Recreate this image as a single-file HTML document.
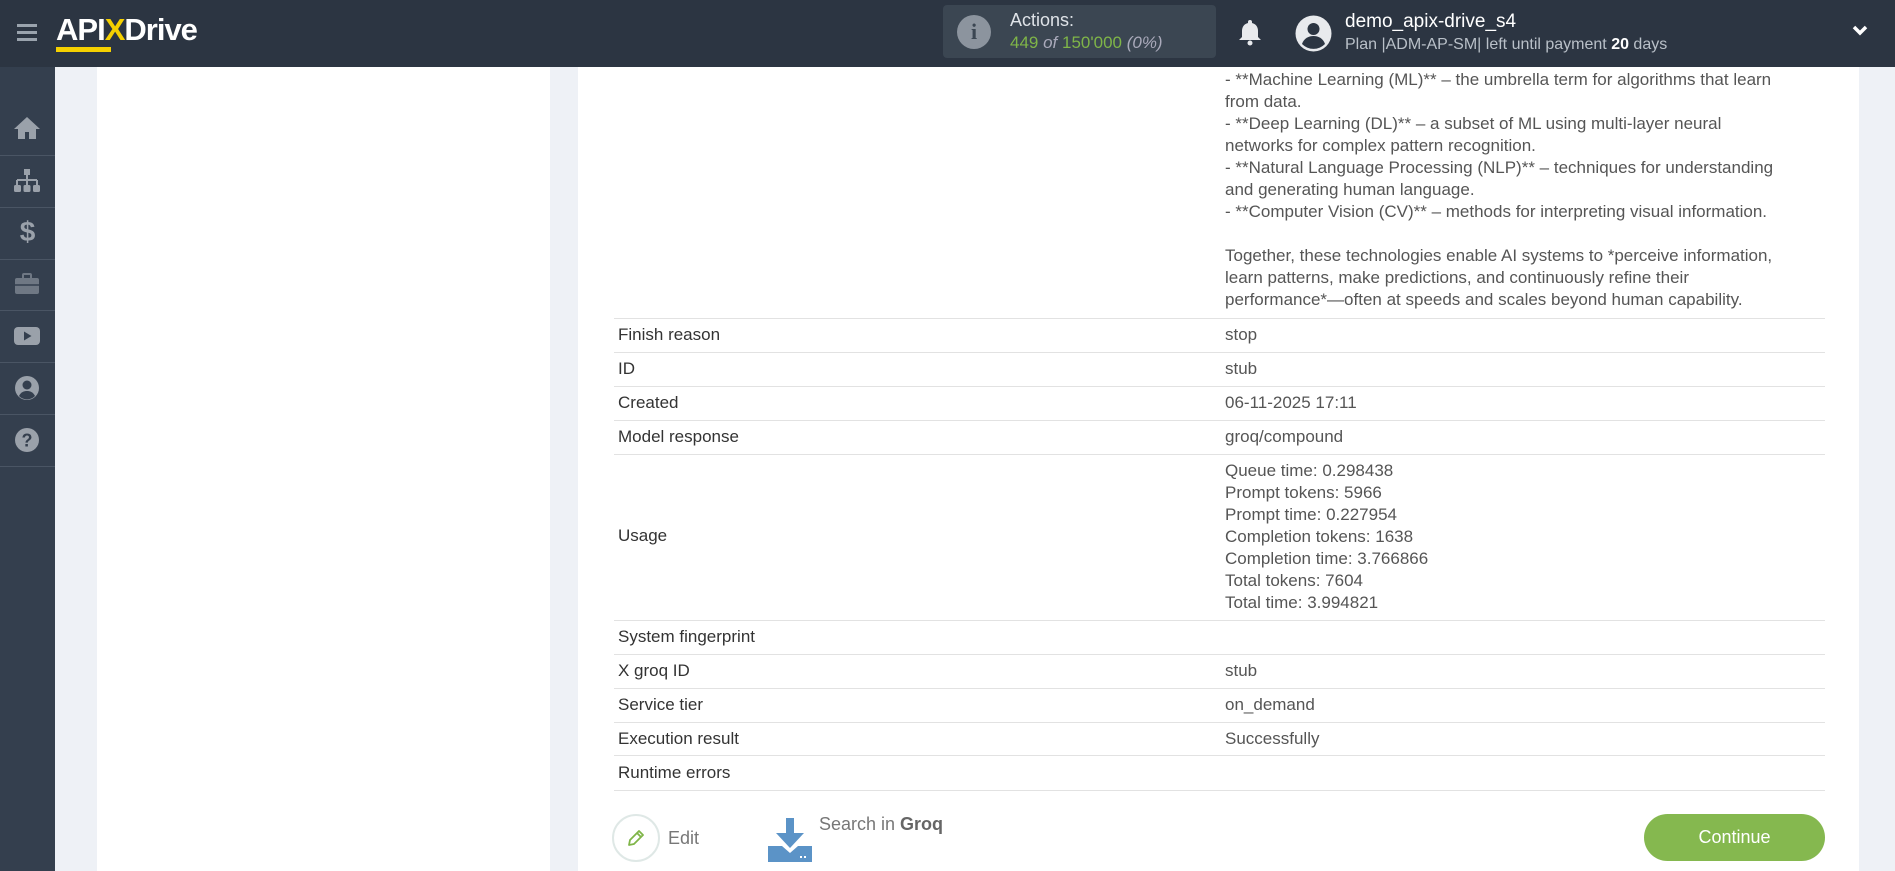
<!DOCTYPE html>
<html><head><meta charset="utf-8"><style>
*{margin:0;padding:0;box-sizing:border-box}
body{width:1895px;height:871px;overflow:hidden;background:#eef1f6;font-family:"Liberation Sans",Arial,sans-serif;position:relative}
.hdr{position:absolute;left:0;top:0;width:1895px;height:67px;background:#2c3542}
.side{position:absolute;left:0;top:67px;width:55px;height:804px;background:#343f4e}
.sep{position:absolute;left:0;width:55px;height:1px;background:#4a5564}
.ic{position:absolute;left:13px;width:28px;height:28px}
.p1{position:absolute;left:97px;top:67px;width:453px;height:804px;background:#fff}
.p2{position:absolute;left:578px;top:67px;width:1281px;height:804px;background:#fff}
.t{position:absolute;font-size:17px;line-height:22px;white-space:nowrap}
.lab{color:#333;left:618px}
.val{color:#555;left:1225px}
.ln{position:absolute;left:614px;width:1211px;height:1px;background:#e2e2e2}
</style></head><body>
<div class="hdr">
 <div style="position:absolute;left:17px;top:24px;width:20px;height:3px;background:#9aa3ad;box-shadow:0 7px 0 #9aa3ad,0 14px 0 #9aa3ad"></div>
 <div style="position:absolute;left:56px;top:12px;font-size:31px;font-weight:bold;color:#fff;letter-spacing:-1px">API<span style="color:#f5d000">X</span>Drive</div>
 <div style="position:absolute;left:56px;top:47px;width:55px;height:5px;background:#f5d000"></div>
 <div style="position:absolute;left:943px;top:5px;width:273px;height:53px;background:#3b4652;border-radius:4px">
  <div style="position:absolute;left:14px;top:10px;width:34px;height:34px;border-radius:50%;background:#8c949e;color:#3b4652;font-weight:bold;font-size:22px;text-align:center;line-height:34px;font-family:'Liberation Serif',serif">i</div>
  <div style="position:absolute;left:67px;top:5px;color:#dfe3e8;font-size:18px">Actions:</div>
  <div style="position:absolute;left:67px;top:28px;color:#7fb548;font-size:17px">449 <i style="color:#aab">of</i> 150'000 <i style="color:#aab">(0%)</i></div>
 </div>
 <svg style="position:absolute;left:1238px;top:18px" width="24" height="28" viewBox="0 0 24 28"><path d="M12 2a2 2 0 0 1 2 2v1c4 1 6 4 6 8v6l3 3H1l3-3v-6c0-4 2-7 6-8V4a2 2 0 0 1 2-2z" fill="#e8eaed"/><circle cx="12" cy="25" r="2.5" fill="#e8eaed"/></svg>
 <svg style="position:absolute;left:1295px;top:15px" width="37" height="37" viewBox="0 0 37 37"><circle cx="18.5" cy="18.5" r="18" fill="#e8eaed"/><circle cx="18.5" cy="14" r="6" fill="#2c3542"/><path d="M7 29c2-6 7-8 11.5-8s9.5 2 11.5 8a16 16 0 0 1-23 0z" fill="#2c3542"/></svg>
 <div style="position:absolute;left:1345px;top:11px;color:#fff;font-size:19px">demo_apix-drive_s4</div>
 <div style="position:absolute;left:1345px;top:36px;color:#b9c0c8;font-size:16px">Plan |ADM-AP-SM| left until payment <b style="color:#fff">20</b> days</div>
 <svg style="position:absolute;left:1852px;top:25px" width="16" height="12" viewBox="0 0 16 12"><path d="M2 2l6 6 6-6" stroke="#fff" stroke-width="3.5" fill="none"/></svg>
</div>
<div class="side">
 <svg class="ic" style="top:47px" viewBox="0 0 28 28"><path d="M14 3L1 15h4v10h7v-7h4v7h7V15h4z" fill="#9aa1aa"/></svg>
 <div class="sep" style="top:88px"></div>
 <svg class="ic" style="top:100px" viewBox="0 0 28 28"><rect x="11" y="2" width="6" height="6" fill="#9aa1aa"/><path d="M14 8v5M4 13h20M4 13v5M14 13v5M24 13v5" stroke="#9aa1aa" stroke-width="2"/><rect x="1" y="18" width="7" height="7" rx="1.5" fill="#9aa1aa"/><rect x="10.5" y="18" width="7" height="7" rx="1.5" fill="#9aa1aa"/><rect x="20" y="18" width="7" height="7" rx="1.5" fill="#9aa1aa"/></svg>
 <div class="sep" style="top:140px"></div>
 <div style="position:absolute;left:0;top:149px;width:55px;text-align:center;color:#9aa1aa;font-size:28px;font-weight:bold">$</div>
 <div class="sep" style="top:192px"></div>
 <svg class="ic" style="top:203px" viewBox="0 0 28 28"><rect x="2" y="8" width="24" height="16" rx="2" fill="#6f7884"/><rect x="10" y="4" width="8" height="5" rx="1" stroke="#6f7884" stroke-width="2" fill="none"/><path d="M2 15h24" stroke="#343f4e" stroke-width="1.5"/></svg>
 <div class="sep" style="top:243px"></div>
 <svg class="ic" style="top:255px" viewBox="0 0 28 28"><rect x="1" y="5" width="26" height="18" rx="4" fill="#9aa1aa"/><path d="M11 9.5v9l7.5-4.5z" fill="#343f4e"/></svg>
 <div class="sep" style="top:295px"></div>
 <svg class="ic" style="top:307px" viewBox="0 0 28 28"><circle cx="14" cy="14" r="12" fill="#9aa1aa"/><circle cx="14" cy="11" r="4.5" fill="#343f4e"/><path d="M6 22c2-4 5-5 8-5s6 1 8 5a11 11 0 0 1-16 0z" fill="#343f4e"/></svg>
 <div class="sep" style="top:347px"></div>
 <svg class="ic" style="top:359px" viewBox="0 0 28 28"><circle cx="14" cy="14" r="12" fill="#9aa1aa"/><text x="14" y="20.5" text-anchor="middle" font-size="18" font-weight="bold" fill="#343f4e" font-family="Liberation Sans">?</text></svg>
 <div class="sep" style="top:399px"></div>
</div>
<div class="p1"></div>
<div class="p2"></div>
<div class="t val" style="top:69px">- **Machine Learning (ML)** – the umbrella term for algorithms that learn<br>from data.<br>- **Deep Learning (DL)** – a subset of ML using multi-layer neural<br>networks for complex pattern recognition.<br>- **Natural Language Processing (NLP)** – techniques for understanding<br>and generating human language.<br>- **Computer Vision (CV)** – methods for interpreting visual information.<br><br>Together, these technologies enable AI systems to *perceive information,<br>learn patterns, make predictions, and continuously refine their<br>performance*—often at speeds and scales beyond human capability.</div>
<div class="ln" style="top:318px"></div>
<div class="t lab" style="top:324px">Finish reason</div><div class="t val" style="top:324px">stop</div>
<div class="ln" style="top:352px"></div>
<div class="t lab" style="top:358px">ID</div><div class="t val" style="top:358px">stub</div>
<div class="ln" style="top:386px"></div>
<div class="t lab" style="top:392px">Created</div><div class="t val" style="top:392px">06-11-2025 17:11</div>
<div class="ln" style="top:420px"></div>
<div class="t lab" style="top:426px">Model response</div><div class="t val" style="top:426px">groq/compound</div>
<div class="ln" style="top:454px"></div>
<div class="t lab" style="top:525px">Usage</div>
<div class="t val" style="top:460px">Queue time: 0.298438<br>Prompt tokens: 5966<br>Prompt time: 0.227954<br>Completion tokens: 1638<br>Completion time: 3.766866<br>Total tokens: 7604<br>Total time: 3.994821</div>
<div class="ln" style="top:620px"></div>
<div class="t lab" style="top:626px">System fingerprint</div>
<div class="ln" style="top:654px"></div>
<div class="t lab" style="top:660px">X groq ID</div><div class="t val" style="top:660px">stub</div>
<div class="ln" style="top:688px"></div>
<div class="t lab" style="top:694px">Service tier</div><div class="t val" style="top:694px">on_demand</div>
<div class="ln" style="top:722px"></div>
<div class="t lab" style="top:728px">Execution result</div><div class="t val" style="top:728px">Successfully</div>
<div class="ln" style="top:755px"></div>
<div class="t lab" style="top:762px">Runtime errors</div>
<div class="ln" style="top:790px"></div>
<div style="position:absolute;left:612px;top:814px;width:48px;height:48px;border:2px solid #dfe8e6;border-radius:50%"></div>
<svg style="position:absolute;left:626px;top:828px" width="20" height="20" viewBox="0 0 20 20"><path d="M3 17l1-5L13 3l4 4-9 9z M11 5l4 4" stroke="#7fb548" stroke-width="1.8" fill="none" stroke-linejoin="round"/></svg>
<div class="t" style="left:668px;top:827px;color:#777;font-size:18px">Edit</div>
<svg style="position:absolute;left:768px;top:818px" width="44" height="44" viewBox="0 0 44 44"><rect x="18" y="0" width="8" height="16" fill="#5b93c7"/><path d="M8 15h28L22 30z" fill="#5b93c7"/><path d="M0 28h14l8 7 8-7h14v16H0z" fill="#5b93c7"/><rect x="32" y="38" width="2" height="2" fill="#fff"/><rect x="36" y="38" width="2" height="2" fill="#fff"/></svg>
<div class="t" style="left:819px;top:813px;color:#777;font-size:18px">Search in <b style="color:#666">Groq</b></div>
<div style="position:absolute;left:1644px;top:814px;width:181px;height:47px;border-radius:24px;background:#85b84f;color:#fff;font-size:18px;text-align:center;line-height:47px">Continue</div>
</body></html>
